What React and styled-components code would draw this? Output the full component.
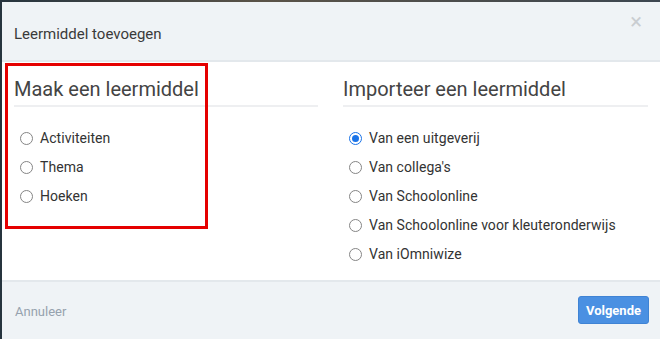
import React from 'react'
import styled, { createGlobalStyle } from 'styled-components'

const Global = createGlobalStyle`
  html, body {
    margin: 0;
    padding: 0;
    background: #2c3a44;
    font-family: Roboto, "Liberation Sans", sans-serif;
  }
`

const Page = styled.div`
  width: 660px;
  height: 339px;
  overflow: hidden;
  padding: 2px 0 0 2px;
  box-sizing: border-box;
  background: linear-gradient(90deg, #26343e 0%, #5a5348 40%, #3c4650 100%);
`

const Modal = styled.div`
  position: relative;
  width: 658px;
  height: 337px;
  display: flex;
  flex-direction: column;
  background: #fff;
`

const Header = styled.div`
  height: 60px;
  display: flex;
  align-items: center;
  justify-content: space-between;
  padding: 5px 18px 0 12px;
  background: #eff3f6;
  border-bottom: 2px solid #e3e8ec;
  box-sizing: border-box;
`

const Title = styled.h4`
  margin: 0;
  font-size: 15px;
  font-weight: 400;
  color: #3a3a3a;
`

const Close = styled.span`
  font-size: 22px;
  line-height: 1;
  color: #c9cdd1;
  margin-top: -24px;
`

const Body = styled.div`
  flex: 1;
  display: grid;
  grid-template-columns: 304px 305px;
  column-gap: 25px;
  padding: 14px 0 0 12px;
`

const Column = styled.div`
  display: flex;
  flex-direction: column;
`

const Heading = styled.h3`
  margin: 0;
  padding-bottom: 3px;
  font-size: 20px;
  font-weight: 400;
  color: #444;
  line-height: 26px;
  border-bottom: 2px solid #eeeff1;
`

const List = styled.div`
  display: flex;
  flex-direction: column;
  gap: 9px;
  padding: 21px 0 0 6px;
`

const Option = styled.label`
  display: flex;
  align-items: center;
  gap: 7px;
  height: 20px;
  font-size: 14px;
  letter-spacing: 0.05px;
  color: #333;
`

const Radio = styled.span`
  width: 13px;
  height: 13px;
  box-sizing: border-box;
  border-radius: 50%;
  border: 1px solid ${p => (p.checked ? '#1a73e8' : '#858585')};
  display: flex;
  align-items: center;
  justify-content: center;
  background: #fff;

  &::after {
    content: '';
    width: 7px;
    height: 7px;
    border-radius: 50%;
    background: ${p => (p.checked ? '#1a73e8' : 'transparent')};
  }
`

const Footer = styled.div`
  height: 59px;
  display: flex;
  align-items: center;
  justify-content: space-between;
  padding: 2px 11px 0 13px;
  background: #eff3f6;
  border-top: 2px solid #e3e8ec;
  box-sizing: border-box;
`

const Cancel = styled.span`
  font-size: 13px;
  color: #96a2ae;
`

const Button = styled.button`
  font-family: inherit;
  font-size: 13px;
  font-weight: 700;
  color: #fff;
  background: #4a90e2;
  border: 1px solid #3f83d4;
  border-radius: 3px;
  height: 28px;
  padding: 0 7px;
  margin-top: -3px;
`

const Highlight = styled.div`
  position: absolute;
  left: 3px;
  top: 61px;
  width: 203px;
  height: 166px;
  border: 3px solid #e50000;
  box-sizing: border-box;
  pointer-events: none;
`

const makeOptions = ['Activiteiten', 'Thema', 'Hoeken']
const importOptions = [
  'Van een uitgeverij',
  "Van collega's",
  'Van Schoolonline',
  'Van Schoolonline voor kleuteronderwijs',
  'Van iOmniwize',
]

const App = () => (
  <Page>
    <Global />
    <Modal>
      <Header>
        <Title>Leermiddel toevoegen</Title>
        <Close>×</Close>
      </Header>
      <Body>
        <Column>
          <Heading>Maak een leermiddel</Heading>
          <List>
            {makeOptions.map(o => (
              <Option key={o}>
                <Radio />
                {o}
              </Option>
            ))}
          </List>
        </Column>
        <Column>
          <Heading>Importeer een leermiddel</Heading>
          <List>
            {importOptions.map((o, i) => (
              <Option key={o}>
                <Radio checked={i === 0} />
                {o}
              </Option>
            ))}
          </List>
        </Column>
      </Body>
      <Footer>
        <Cancel>Annuleer</Cancel>
        <Button>Volgende</Button>
      </Footer>
      <Highlight />
    </Modal>
  </Page>
)

export default App
